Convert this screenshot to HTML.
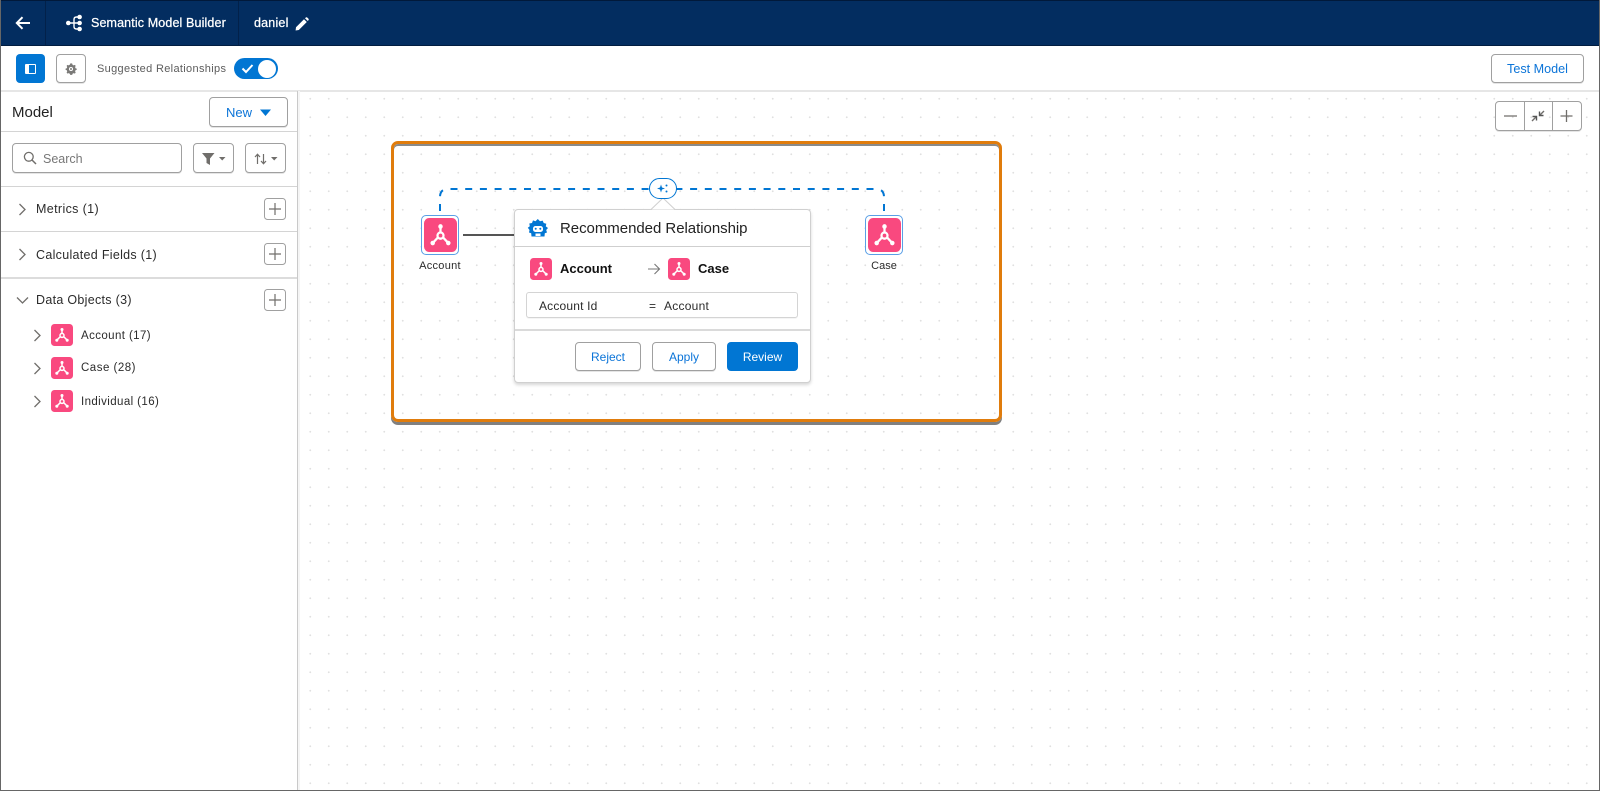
<!DOCTYPE html>
<html lang="en"><head><meta charset="utf-8"><title>Semantic Model Builder</title>
<style>
html,body{margin:0;padding:0;width:1600px;height:791px;overflow:hidden;background:#fff}
body{position:relative;font-family:"Liberation Sans",sans-serif;color:#181818}
#w{position:absolute;left:0;top:0;width:1600px;height:791px;filter:blur(.35px)}
.a{position:absolute;box-sizing:border-box}
.t{position:absolute;white-space:nowrap;line-height:16px;height:16px}
.btn{position:absolute;box-sizing:border-box;border:1px solid #a0a0a0;border-radius:4px;background:#fff;box-shadow:0 1px 0 rgba(0,0,0,.1)}
.lbl{display:flex;align-items:center;justify-content:center;color:#0b74d8;font-size:13px}
.ln{position:absolute;left:1px;width:296px;height:1px;background:#d4d4d4}
svg{position:absolute;display:block;overflow:visible}
.g{fill:none;stroke:#706e6b;stroke-width:1.3}
</style></head><body><div id="w">
<svg width="0" height="0" style="position:absolute"><defs>
<g id="obj"><rect width="22" height="22" rx="3.5" fill="#f9497f"/>
<g fill="none" stroke="#fff" stroke-width="1.5"><circle cx="11" cy="11.4" r="2"/><path d="M11 5.500v4M9.300 12.600 5.800 16.200M12.700 12.600 16.200 16.200"/></g>
<g fill="#fff"><circle cx="11" cy="5.500" r="1.500"/><circle cx="5.800" cy="16.200" r="1.500"/><circle cx="16.200" cy="16.200" r="1.500"/></g></g>
<g id="plus"><rect x=".5" y=".5" width="21" height="21" rx="3" fill="#fff" stroke="#a0a0a0"/><path d="M11 5v12M5 11h12" stroke="#706e6b" stroke-width="1.200"/></g>
</defs></svg>

<!-- canvas -->
<div class="a" style="left:298px;top:91px;width:1301px;height:699px;background-color:#fff;background-image:radial-gradient(circle at 50% 50%,#e0e0e0 0,#e0e0e0 .8px,transparent 1.1px);background-size:18.5px 18.5px;background-position:3px -1.5px"></div>

<!-- header -->
<div class="a" style="left:0;top:0;width:1600px;height:46px;background:#032d60;border-top:1px solid #01193a;border-bottom:1px solid #011d40"></div>
<div class="a" style="left:45px;top:1px;width:1px;height:44px;background:#02214a"></div>
<div class="a" style="left:238px;top:1px;width:1px;height:44px;background:#02214a"></div>
<svg style="left:15px;top:15px" width="16" height="16" viewBox="0 0 16 16"><path d="M15 8H2M7.500 2.200 1.800 8l5.700 5.800" fill="none" stroke="#fff" stroke-width="2"/></svg>
<svg style="left:65px;top:14px" width="18" height="18" viewBox="0 0 18 18" fill="#fff"><circle cx="3.300" cy="9" r="2.300"/><circle cx="14.600" cy="3" r="2.300"/><circle cx="14.600" cy="9" r="2.300"/><circle cx="14.600" cy="15" r="2.300"/><path d="M3 9h12M14 3H11.500Q9 3 9 5.500V12.500Q9 15 11.500 15H14" fill="none" stroke="#fff" stroke-width="1.400"/></svg>
<div class="t" style="left:91px;top:15px;font-size:12.500px;color:#fff;letter-spacing:.13px;-webkit-text-stroke:.25px #fff">Semantic Model Builder</div>
<div class="t" style="left:254px;top:15px;font-size:12.500px;color:#fff;letter-spacing:.2px;-webkit-text-stroke:.25px #fff">daniel</div>
<svg style="left:295px;top:17px" width="14" height="14" viewBox="0 0 14 14" fill="#fff"><path d="M1 10.200 9 2.200 11.800 5 3.800 13 .6 13.500ZM10 1.200 11 .4Q11.600 0 12.200 .5L13.500 1.800Q14 2.400 13.600 3L12.800 4Z"/></svg>

<!-- toolbar -->
<div class="a" style="left:16px;top:54px;width:29px;height:29px;background:#0176d3;border-radius:4px"></div>
<div class="a" style="left:25px;top:64px;width:11px;height:10px;border:1.500px solid #fff;background:linear-gradient(90deg,#fff 35%,#0176d3 35%);border-radius:1px"></div>
<div class="btn" style="left:56px;top:54px;width:30px;height:29px"></div>
<svg style="left:65px;top:63px" width="12" height="12" viewBox="0 0 12 12"><path d="M6 .3l1.200.3.300 1.200 1.200.6 1.100-.5.900 1-.6 1.100.4 1.200 1.200.4v1.300l-1.200.4-.4 1.200.6 1.100-.9 1-1.100-.5-1.200.6-.3 1.200H5.200l-.4-1.200-1.200-.6-1.100.5-.9-1 .6-1.100-.4-1.200L.6 6.900V5.600l1.200-.4.400-1.200-.6-1.100.9-1 1.100.5 1.200-.6.400-1.200z" fill="#7b7a78"/><circle cx="6" cy="6" r="2" fill="#fff"/><circle cx="6" cy="6" r="1" fill="#7b7a78"/></svg>
<div class="t" style="left:97px;top:61px;font-size:11px;color:#5c5c5c;letter-spacing:.33px">Suggested Relationships</div>
<div class="a" style="left:234px;top:58px;width:44px;height:21px;border-radius:11px;background:#0176d3"></div>
<div class="a" style="left:258px;top:60px;width:18px;height:18px;border-radius:50%;background:#fff"></div>
<svg style="left:241px;top:63px" width="13" height="11" viewBox="0 0 13 11"><path d="M1.500 5.500 5 9 11.500 2" fill="none" stroke="#fff" stroke-width="2"/></svg>
<div class="btn lbl" style="left:1491px;top:54px;width:93px;height:29px;font-size:12.600px">Test Model</div>
<div class="a" style="left:0;top:90px;width:1600px;height:2px;background:#e6e6e6"></div>

<!-- left panel -->
<div class="a" style="left:297px;top:91px;width:1px;height:699px;background:#c9c9c9"></div>
<div class="a" style="left:298px;top:91px;width:2px;height:699px;background:#f5f5f5"></div>
<div class="t" style="left:12px;top:105px;font-size:15px;color:#222">Model</div>
<div class="btn lbl" style="left:209px;top:97px;width:79px;height:30px;justify-content:flex-start;padding-left:16px">New</div>
<svg style="left:260px;top:109px" width="12" height="8"><path d="M0 .5h11L5.500 7z" fill="#0176d3"/></svg>
<div class="ln" style="top:131px"></div>
<div class="btn" style="left:12px;top:143px;width:170px;height:30px"></div>
<svg style="left:23px;top:151px" width="14" height="14" viewBox="0 0 14 14"><circle cx="5.800" cy="5.800" r="4.400" fill="none" stroke="#706e6b" stroke-width="1.300"/><path d="M9 9l4 4" stroke="#706e6b" stroke-width="1.500"/></svg>
<div class="t" style="left:43px;top:151px;font-size:12.500px;color:#777">Search</div>
<div class="btn" style="left:193px;top:143px;width:41px;height:30px"></div>
<svg style="left:202px;top:153px" width="13" height="12"><path d="M0 0h12.500L8 5.500V12L4.500 10V5.500z" fill="#706e6b"/></svg>
<svg style="left:219px;top:157px" width="7" height="4"><path d="M0 0h6.500L3.200 3.500z" fill="#706e6b"/></svg>
<div class="btn" style="left:245px;top:143px;width:41px;height:30px"></div>
<svg style="left:254px;top:153px" width="13" height="12" viewBox="0 0 13 12"><path d="M3.500 11V1.500M1 4 3.500 1.300 6 4M9.500 1v9.500M7 8l2.500 2.700L12 8" fill="none" stroke="#706e6b" stroke-width="1.200"/></svg>
<svg style="left:271px;top:157px" width="7" height="4"><path d="M0 0h6.500L3.200 3.500z" fill="#706e6b"/></svg>
<div class="ln" style="top:186px"></div>

<svg class="g" style="left:18px;top:203px" width="9" height="13"><path d="M1.500 1l5.500 5.500L1.500 12"/></svg>
<div class="t" style="left:36px;top:201px;font-size:12.500px;letter-spacing:.36px;color:#2b2b2b">Metrics (1)</div>
<svg style="left:264px;top:198px" width="22" height="22"><use href="#plus"/></svg>
<div class="ln" style="top:231px"></div>
<svg class="g" style="left:18px;top:248px" width="9" height="13"><path d="M1.500 1l5.500 5.500L1.500 12"/></svg>
<div class="t" style="left:36px;top:247px;font-size:12.500px;letter-spacing:.3px;color:#2b2b2b">Calculated Fields (1)</div>
<svg style="left:264px;top:243px" width="22" height="22"><use href="#plus"/></svg>
<div class="a" style="left:1px;top:277px;width:296px;height:1.500px;background:#dcdcdc"></div>
<svg class="g" style="left:16px;top:296px" width="13" height="9"><path d="M1 1.500l5.500 5.500L12 1.500"/></svg>
<div class="t" style="left:36px;top:292px;font-size:12.500px;letter-spacing:.3px;color:#2b2b2b">Data Objects (3)</div>
<svg style="left:264px;top:289px" width="22" height="22"><use href="#plus"/></svg>

<svg class="g" style="left:33px;top:329px" width="9" height="13"><path d="M1.500 1l5.500 5.500L1.500 12"/></svg>
<svg style="left:51px;top:324px" width="22" height="22"><use href="#obj"/></svg>
<div class="t" style="left:81px;top:328px;font-size:11.500px;letter-spacing:.4px;color:#2b2b2b">Account (17)</div>
<svg class="g" style="left:33px;top:362px" width="9" height="13"><path d="M1.500 1l5.500 5.500L1.500 12"/></svg>
<svg style="left:51px;top:357px" width="22" height="22"><use href="#obj"/></svg>
<div class="t" style="left:81px;top:360px;font-size:11.500px;letter-spacing:.5px;color:#2b2b2b">Case (28)</div>
<svg class="g" style="left:33px;top:395px" width="9" height="13"><path d="M1.500 1l5.500 5.500L1.500 12"/></svg>
<svg style="left:51px;top:390px" width="22" height="22"><use href="#obj"/></svg>
<div class="t" style="left:81px;top:394px;font-size:11.500px;letter-spacing:.4px;color:#2b2b2b">Individual (16)</div>

<!-- zoom controls -->
<div class="btn" style="left:1495px;top:101px;width:87px;height:30px;background:transparent"></div>
<div class="a" style="left:1524px;top:101px;width:1px;height:30px;background:#a0a0a0"></div>
<div class="a" style="left:1552px;top:101px;width:1px;height:30px;background:#a0a0a0"></div>
<svg style="left:1503px;top:109px" width="72" height="14"><path d="M1 7h13M63.500 1v12M57.500 7h12" stroke="#706e6b" stroke-width="1.300" fill="none"/><path d="M41 2 37 6M29 12l4-4" stroke="#706e6b" stroke-width="1.400"/><path d="M36.500 2.500v4h4M29.500 7.500h4v4" fill="none" stroke="#555" stroke-width="1.400"/></svg>

<!-- orange highlight -->
<div class="a" style="left:391px;top:141px;width:611px;height:281px;border:3.400px solid #e07c0c;border-radius:7px;box-shadow:0 3px 0 #808080,inset 0 2px 0 #8a8a8a"></div>

<!-- dashed connector -->
<svg style="left:430px;top:170px" width="470" height="50"><path d="M10 41V27Q10 19 18 19H220" fill="none" stroke="#0176d3" stroke-width="2" stroke-dasharray="7 7.700"/><path d="M454 41V27Q454 19 446 19H246" fill="none" stroke="#0176d3" stroke-width="2" stroke-dasharray="7 7.700"/></svg>
<div class="a" style="left:463px;top:234px;width:52px;height:2px;background:#555"></div>

<!-- nodes -->
<div class="a" style="left:421px;top:215px;width:38px;height:40px;background:#fff;border:1.500px solid #5a9fe6;border-radius:5px"></div>
<svg style="left:424px;top:218px" width="33" height="34" viewBox="0 0 22 22" preserveAspectRatio="none"><use href="#obj"/></svg>
<div class="t" style="left:400px;top:258px;width:80px;text-align:center;font-size:11px;color:#2b2b2b;letter-spacing:.3px">Account</div>
<div class="a" style="left:865px;top:215px;width:38px;height:40px;background:#fff;border:1.500px solid #5a9fe6;border-radius:5px"></div>
<svg style="left:868px;top:218px" width="33" height="34" viewBox="0 0 22 22" preserveAspectRatio="none"><use href="#obj"/></svg>
<div class="t" style="left:844px;top:258px;width:80px;text-align:center;font-size:11px;color:#2b2b2b">Case</div>

<!-- popup -->
<div class="a" style="left:514px;top:209px;width:297px;height:174px;background:#fff;border:1px solid #d0d0d0;border-radius:4px;box-shadow:0 2px 3px rgba(0,0,0,.16)"></div>
<svg style="left:651px;top:198px" width="24" height="13"><path d="M0 11.500 12 0 24 11.500" fill="#fff" stroke="#d0d0d0"/><path d="M1 12h22v1H1z" fill="#fff"/></svg>
<div class="a" style="left:649px;top:178px;width:28px;height:21px;background:#fff;border:1.800px solid #0176d3;border-radius:11px"></div>
<svg style="left:656px;top:182px" width="14" height="13" viewBox="0 0 14 13" fill="#0176d3"><path d="M5 2.500 6 5.500 9 6.500 6 7.500 5 10.500 4 7.500 1 6.500 4 5.500z"/><circle cx="10.500" cy="3.500" r="1"/><circle cx="10.500" cy="9.500" r="1"/></svg>

<svg style="left:527px;top:218px" width="22" height="20" viewBox="0 0 22 20"><path d="M2.500 12 .8 9.800 2.800 8.300 2.300 5.500 5 5 6 2.400 8.500 3.200 10.800 1 13 3.200 15.700 2.600 16.700 5 19.300 5.800 18.800 8.400 21 10 19.200 12 20 14.500 17.800 15.300 17.500 18.500H4.500L4.200 15.300 2 14.500z" fill="#0176d3"/><rect x="6" y="8" width="10" height="6" rx="2.500" fill="#fff"/><circle cx="8.700" cy="10.800" r="1" fill="#0176d3"/><circle cx="13.300" cy="10.800" r="1" fill="#0176d3"/><path d="M8.500 18v-2.500h5V18" fill="#fff"/></svg>
<div class="t" style="left:560px;top:220px;font-size:15px;line-height:18px;height:18px;color:#222;letter-spacing:-.04px">Recommended Relationship</div>
<div class="a" style="left:515px;top:246px;width:295px;height:1px;background:#cfcfcf"></div>

<svg style="left:530px;top:258px" width="22" height="22"><use href="#obj"/></svg>
<div class="t" style="left:560px;top:261px;font-size:13px;font-weight:bold;color:#111">Account</div>
<svg style="left:647px;top:262px" width="14" height="14" viewBox="0 0 14 14"><path d="M1 7h11.500M7.500 2l5 5-5 5" fill="none" stroke="#777" stroke-width="1.100"/></svg>
<svg style="left:668px;top:258px" width="22" height="22"><use href="#obj"/></svg>
<div class="t" style="left:698px;top:261px;font-size:13px;font-weight:bold;color:#111">Case</div>

<div class="a" style="left:526px;top:292px;width:272px;height:26px;border:1px solid #d4d4d4;border-radius:3px;box-shadow:0 1px 0 rgba(0,0,0,.04)"></div>
<div class="t" style="left:539px;top:297.500px;font-size:12px;letter-spacing:.18px;color:#2b2b2b">Account Id</div>
<div class="t" style="left:649px;top:297.500px;font-size:12px;color:#2b2b2b">=</div>
<div class="t" style="left:664px;top:297.500px;font-size:12px;letter-spacing:.25px;color:#2b2b2b">Account</div>
<div class="a" style="left:515px;top:329px;width:295px;height:1.500px;background:#dadada"></div>
<div class="btn lbl" style="left:575px;top:342px;width:66px;height:29px;font-size:12px">Reject</div>
<div class="btn lbl" style="left:652px;top:342px;width:64px;height:29px;font-size:12px">Apply</div>
<div class="a lbl" style="left:727px;top:342px;width:71px;height:29px;font-size:12px;background:#0176d3;color:#fff;border-radius:4px">Review</div>

<!-- outer frame -->
<div class="a" style="left:0;top:0;width:1600px;height:791px;border-left:1px solid #666;border-right:1px solid #666;border-bottom:1px solid #666;pointer-events:none"></div>
</div></body></html>
